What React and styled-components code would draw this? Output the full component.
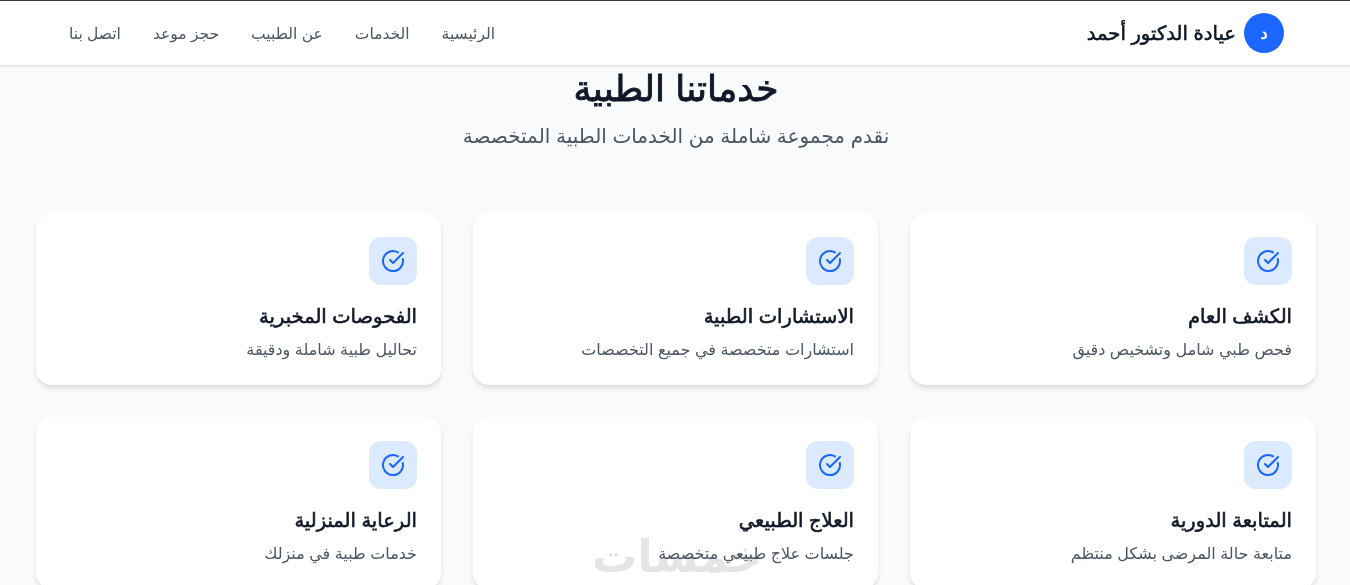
import React from 'react';
import styled, { createGlobalStyle, css } from 'styled-components';
import { CircleCheckBig } from 'lucide-react';

const GlobalStyle = createGlobalStyle`
    html, body {
        margin: 0;
        height: 585px;
        overflow: hidden;
    }
    body {
        background: #f9fafb;
        font-family: "Inter", "DejaVu Sans", sans-serif;
    }
`

// the reference bold is narrower than the installed bold Arabic, so thicken the regular cut
const heavy = css`
    font-weight: 400;
    -webkit-text-stroke: ${props => props.$stroke || 0.6}px currentColor;
`

const Page = styled.div`
    position: relative;
    height: 585px;
    overflow: hidden;
    direction: rtl;
`
const Navbar = styled.nav`
    position: relative;
    z-index: 2;
    height: 64px;
    background: #fff;
    border-top: 1px solid #3a3a3a;
    box-shadow: 0 1px 3px rgba(0, 0, 0, 0.1), 0 1px 2px rgba(0, 0, 0, 0.06);
`
const NavInner = styled.div`
    display: flex;
    align-items: center;
    justify-content: space-between;
    height: 100%;
    margin: 0 66px 0 69px;
`
const Brand = styled.div`
    ${heavy}
    display: flex;
    align-items: center;
    gap: 8px;
    font-size: 19.6px;
    color: #111827;
`
const Avatar = styled.div`
    display: flex;
    align-items: center;
    justify-content: center;
    width: 40px;
    height: 40px;
    border-radius: 50%;
    background: #1a66ff;
    color: #fff;
    font-size: 16px;
`
const NavLinks = styled.div`
    display: flex;
    gap: 32px;
`
const NavLink = styled.a`
    font-size: 15.5px;
    color: #4b5563;
`
const Main = styled.main`
    margin: 0 34px 0 36px;
`
const Header = styled.header`
    padding-top: 1px;
    margin-bottom: 63px;
    text-align: center;
`
const Title = styled.h2`
    ${heavy}
    margin: 0 0 12px;
    font-size: 36px;
    line-height: 44px;
    color: #111827;
`
const Subtitle = styled.p`
    margin: 0;
    font-size: 20px;
    line-height: 28px;
    color: #4b5563;
`
const Grid = styled.div`
    display: grid;
    grid-template-columns: 406px 405px 405px;
    gap: 32px;
`
const Card = styled.article`
    padding: 24px;
    height: 172px;
    box-sizing: border-box;
    background: #fff;
    border-radius: 16px;
    box-shadow: 0 4px 6px -1px rgba(0, 0, 0, 0.1), 0 2px 4px -1px rgba(0, 0, 0, 0.06);
`
const IconBox = styled.div`
    display: flex;
    align-items: center;
    justify-content: center;
    width: 48px;
    height: 48px;
    margin-bottom: 17px;
    border-radius: 12px;
    background: #dbeafe;
    color: #1a66ff;
`
const CardTitle = styled.h3`
    ${heavy}
    margin: 0 0 7px;
    font-size: 19.5px;
    line-height: 28px;
    color: #111827;
`
const CardText = styled.p`
    margin: 0;
    font-size: 16px;
    line-height: 24px;
    color: #4b5563;
`
const Watermark = styled.div`
    position: absolute;
    left: 592px;
    bottom: 0;
    direction: rtl;
    font-size: 45px;
    line-height: 58px;
    font-weight: 700;
    color: #e5e5e5;
    mix-blend-mode: multiply;
`

const links = ['الرئيسية', 'الخدمات', 'عن الطبيب', 'حجز موعد', 'اتصل بنا']

const services = [
    { title: 'الكشف العام', text: 'فحص طبي شامل وتشخيص دقيق' },
    { title: 'الاستشارات الطبية', text: 'استشارات متخصصة في جميع التخصصات' },
    { title: 'الفحوصات المخبرية', text: 'تحاليل طبية شاملة ودقيقة' },
    { title: 'المتابعة الدورية', text: 'متابعة حالة المرضى بشكل منتظم' },
    { title: 'العلاج الطبيعي', text: 'جلسات علاج طبيعي متخصصة' },
    { title: 'الرعاية المنزلية', text: 'خدمات طبية في منزلك' },
]

const App = () => (
    <Page>
        <GlobalStyle />
        <Navbar>
            <NavInner>
                <Brand>
                    <Avatar>د</Avatar>
                    عيادة الدكتور أحمد
                </Brand>
                <NavLinks>
                    {links.map(link => <NavLink key={link}>{link}</NavLink>)}
                </NavLinks>
            </NavInner>
        </Navbar>
        <Main>
            <Header>
                <Title $stroke={0.9}>خدماتنا الطبية</Title>
                <Subtitle>نقدم مجموعة شاملة من الخدمات الطبية المتخصصة</Subtitle>
            </Header>
            <Grid>
                {services.map(item => (
                    <Card key={item.title}>
                        <IconBox><CircleCheckBig size={24} /></IconBox>
                        <CardTitle>{item.title}</CardTitle>
                        <CardText>{item.text}</CardText>
                    </Card>
                ))}
            </Grid>
        </Main>
        <Watermark>خمسات</Watermark>
    </Page>
)

export default App;
